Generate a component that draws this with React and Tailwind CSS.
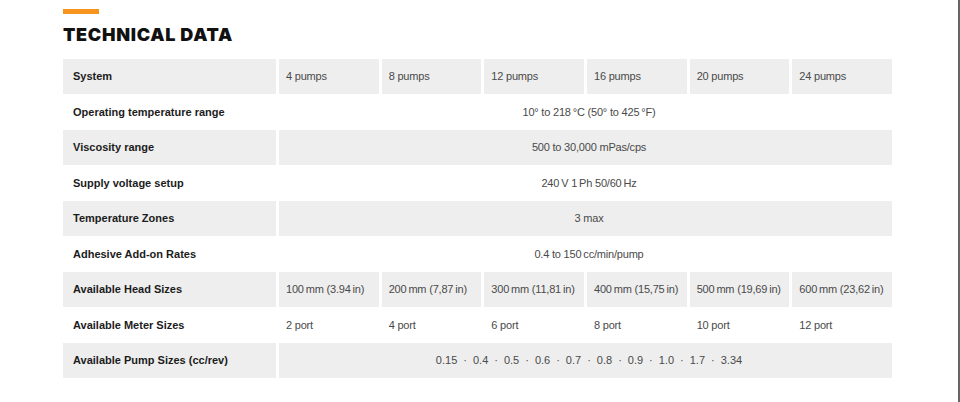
const pumps = ["4 pumps", "8 pumps", "12 pumps", "16 pumps", "20 pumps", "24 pumps"];
const heads = [
  "100\u2009mm (3.94\u2009in)",
  "200\u2009mm (7,87\u2009in)",
  "300\u2009mm (11,81\u2009in)",
  "400\u2009mm (15,75\u2009in)",
  "500\u2009mm (19,69\u2009in)",
  "600\u2009mm (23,62\u2009in)",
];
const meters = ["2 port", "4 port", "6 port", "8 port", "10 port", "12 port"];
const pumpSizes = ["0.15", "0.4", "0.5", "0.6", "0.7", "0.8", "0.9", "1.0", "1.7", "3.34"];

const rows = [
  { label: "System", cells: pumps },
  { label: "Operating temperature range", span: "10° to 218\u2009°C (50° to 425\u2009°F)" },
  { label: "Viscosity range", span: "500 to 30,000 mPas/cps" },
  { label: "Supply voltage setup", span: "240\u2009V 1\u2009Ph 50/60\u2009Hz" },
  { label: "Temperature Zones", span: "3 max" },
  { label: "Adhesive Add-on Rates", span: "0.4 to 150\u2009cc/min/pump" },
  { label: "Available Head Sizes", cells: heads },
  { label: "Available Meter Sizes", cells: meters },
  { label: "Available Pump Sizes (cc/rev)", pumpRow: true },
];

const App = () => {
  return (
    <div
      className="w-[960px] h-[402px] bg-white border-r-2 border-[#666] overflow-hidden"
      style={{ fontFamily: '"Liberation Sans", Arial, sans-serif' }}
    >
      <div className="pl-[63px] pt-[9px]">
        {/* ---------- HEADING ---------- */}
        <div className="w-[36px] h-[5px] bg-[#f7941d]" />
        <h2
          className="mt-[10px] text-[18px] leading-[22px] font-black text-[#111] tracking-[0.7px]"
          style={{ fontFamily: "Inter, sans-serif" }}
        >
          TECHNICAL DATA
        </h2>

        {/* ---------- TABLE ---------- */}
        <div className="mt-[13px] w-[829px] grid grid-cols-[213px_repeat(6,1fr)] gap-x-[3px] text-[11px]">
          {rows.map((row, i) => {
            const grey = i % 2 === 0;
            const bg = grey ? "bg-[#eeeeee]" : "bg-white";
            const h = grey ? "h-[35px]" : "h-[36px]";
            return (
              <div key={row.label} className="contents">
                <div className={`${bg} ${h} flex items-center pl-[10px] font-bold text-[#1c1c1c]`}>
                  {row.label}
                </div>
                {row.cells &&
                  row.cells.map((c) => (
                    <div key={c} className={`${bg} ${h} flex items-center pl-[7px] text-[#4a4a4a] tracking-[-0.2px]`}>
                      {c}
                    </div>
                  ))}
                {row.span && (
                  <div className={`${bg} ${h} col-span-6 flex items-center justify-center pl-[7px] text-[#4a4a4a] tracking-[-0.2px]`}>
                    {row.span}
                  </div>
                )}
                {row.pumpRow && (
                  <div className={`${bg} ${h} col-span-6 flex items-center justify-center pl-[7px] text-[#4a4a4a]`}>
                    {pumpSizes.map((p, j) => (
                      <span key={p} className="flex items-center">
                        {j > 0 && <span className="mx-[6px]">·</span>}
                        {p}
                      </span>
                    ))}
                  </div>
                )}
              </div>
            );
          })}
        </div>
      </div>
    </div>
  );
};

export default App;
